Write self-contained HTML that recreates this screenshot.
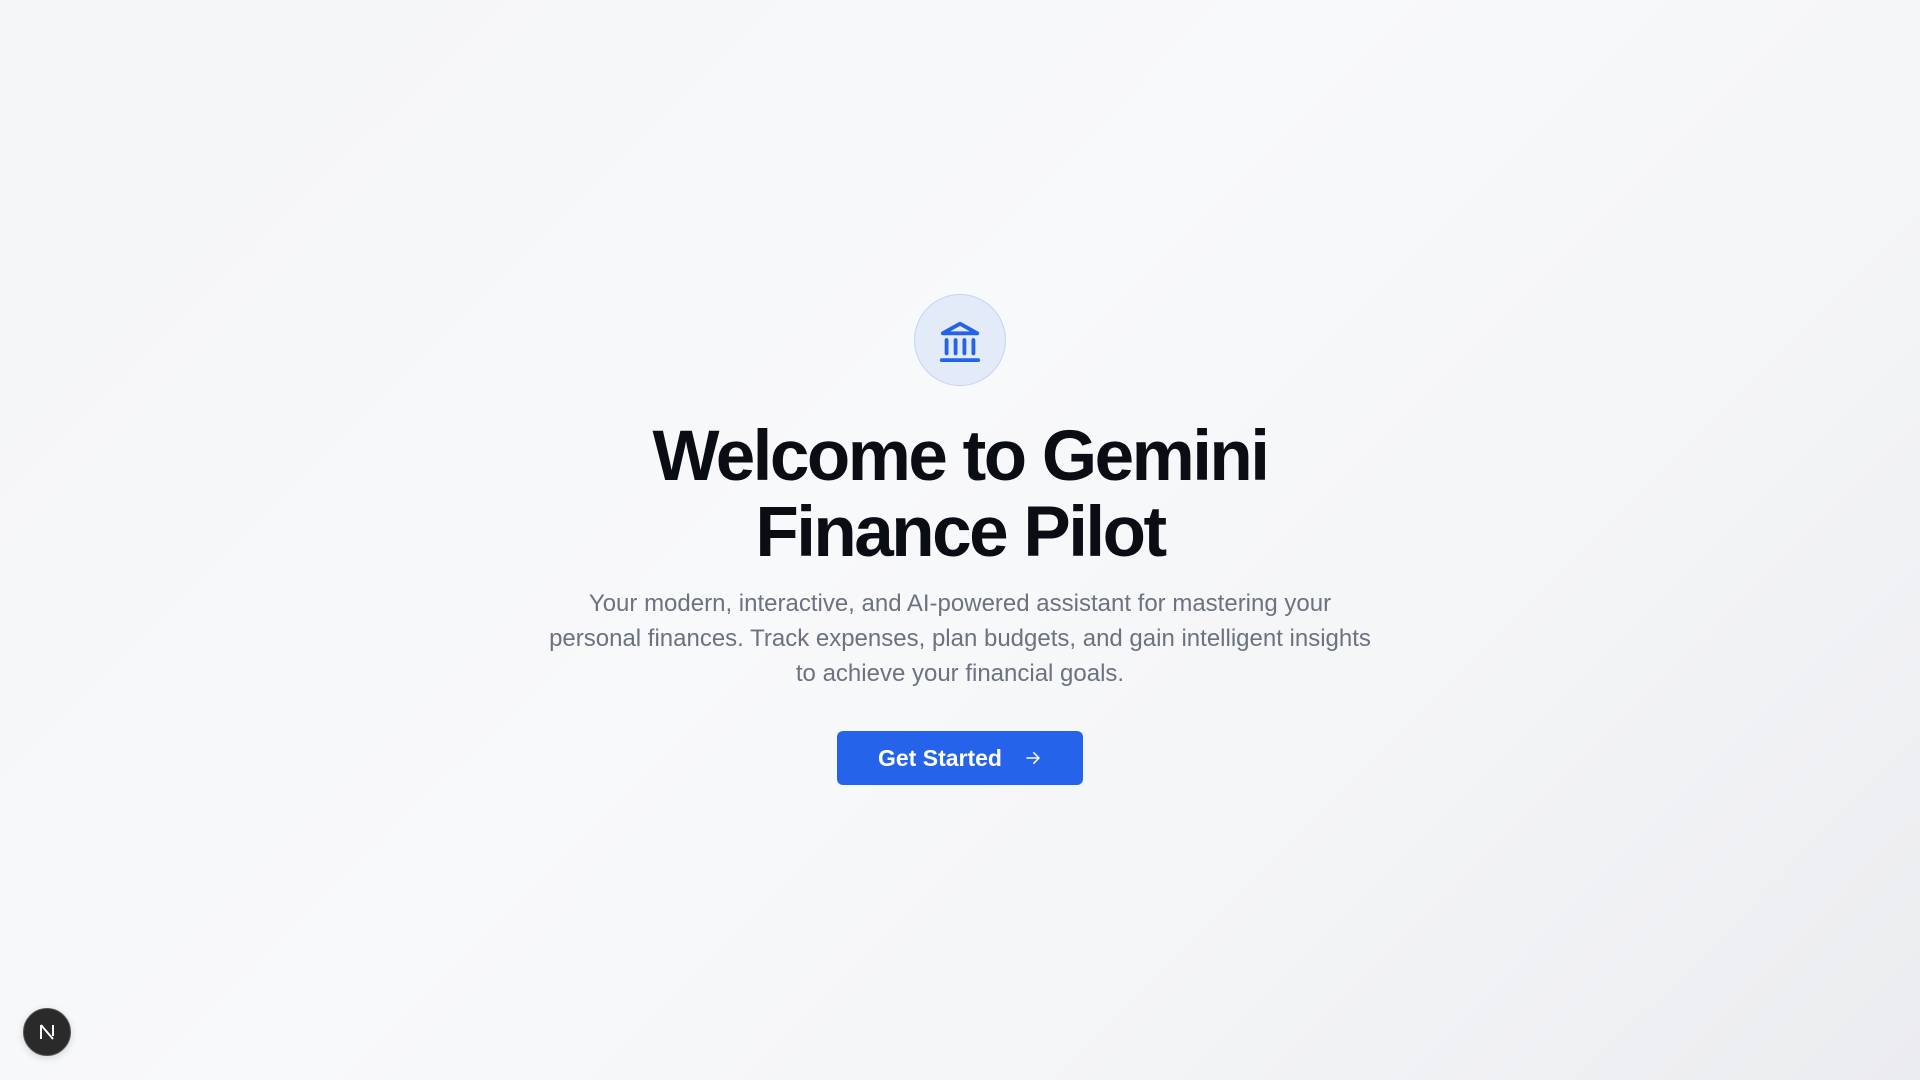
<!DOCTYPE html>
<html><head><style>
html,body{margin:0;width:1920px;height:1080px;overflow:hidden}
body{background:linear-gradient(135deg,#f4f5f7 0%,#f8f9fb 45%,#f4f5f7 70%,#ebecef 100%);font-family:"Liberation Sans",sans-serif;position:relative}
.icon{position:absolute;left:914px;top:294px;width:90px;height:90px;border-radius:50%;background:#e3eaf8;border:1px solid #c2d3f5;display:flex;align-items:center;justify-content:center}
h1{position:absolute;left:0;right:0;top:419px;margin:0;text-align:center;font-size:71px;line-height:76px;font-weight:700;letter-spacing:-2.5px;color:#0b0d14}
p{position:absolute;left:0;right:0;top:586px;margin:0;text-align:center;font-size:24px;line-height:35px;color:#6b7280;white-space:nowrap}
.btn{position:absolute;left:837px;top:731px;width:246px;height:54px;border-radius:6px;background:#2563eb;color:#fff;font-weight:700;font-size:23px;display:flex;align-items:center;justify-content:center;gap:22px}
.n{position:absolute;left:23px;top:1008px;width:46px;height:46px;border-radius:50%;background:#2a2a2a;border:1px solid #555;color:#fff;display:flex;align-items:center;justify-content:center;box-shadow:0 2px 8px rgba(0,0,0,.15)}
</style></head><body>
<div class="icon"><svg width="46" height="46" viewBox="0 0 24 24" fill="none" stroke="#2563eb" stroke-width="2" stroke-linecap="round" stroke-linejoin="round"><path d="M3 8.5 12 3.5l9 5z"/><path d="M5 12v7M9.7 12v7M14.3 12v7M19 12v7"/><path d="M2.5 22.5h19"/></svg></div>
<h1>Welcome to Gemini<br>Finance Pilot</h1>
<p>Your modern, interactive, and AI-powered assistant for mastering your<br>personal finances. Track expenses, plan budgets, and gain intelligent insights<br>to achieve your financial goals.</p>
<div class="btn"><span>Get Started</span><svg width="18" height="18" viewBox="0 0 24 24" fill="none" stroke="#fff" stroke-width="2" stroke-linecap="round" stroke-linejoin="round"><path d="M4 12h16M13 5l7 7-7 7"/></svg></div>
<div class="n"><svg width="20" height="20" viewBox="0 0 20 20"><path d="M4 3v14M4 3l12 14M16 3v11" stroke="#fff" stroke-width="2" fill="none"/></svg></div>
</body></html>
